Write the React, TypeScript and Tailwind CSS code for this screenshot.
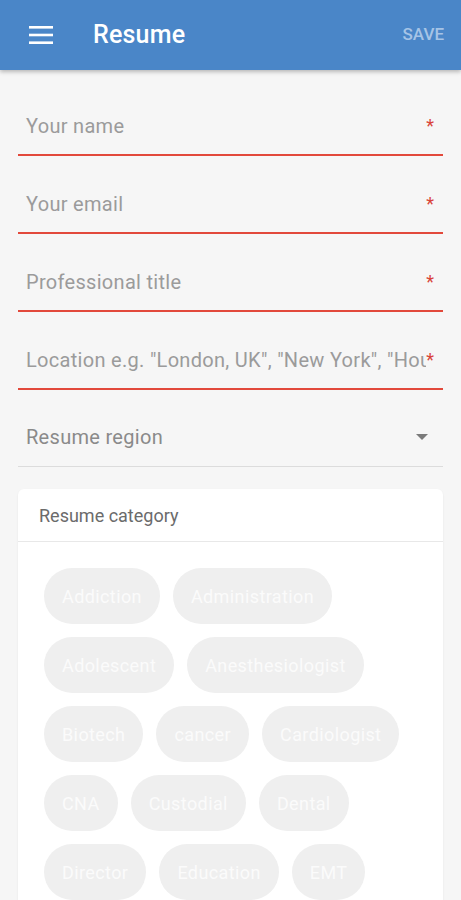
import React from 'react'

const fields = [
    'Your name',
    'Your email',
    'Professional title',
    'Location e.g. "London, UK", "New York", "Houston, TX"',
]

const categories = [
    'Addiction',
    'Administration',
    'Adolescent',
    'Anesthesiologist',
    'Biotech',
    'cancer',
    'Cardiologist',
    'CNA',
    'Custodial',
    'Dental',
    'Director',
    'Education',
    'EMT',
    'Engineering',
    'Finance',
]

const MenuIcon = () => (
    <svg width="24" height="24" viewBox="0 0 24 24" fill="white">
        <rect x="0" y="3" width="24" height="2.6" />
        <rect x="0" y="10.7" width="24" height="2.6" />
        <rect x="0" y="18.4" width="24" height="2.6" />
    </svg>
)

const RequiredField: React.FC<{ label: string }> = ({ label }) => (
    <div className="pt-[36px] pb-[16px] border-b-2 border-[#e2493b] flex items-center">
        <span className="flex-1 min-w-0 pl-[8px] text-[20px] leading-[24px] tracking-[0.3px] text-[#9b9b9b] whitespace-nowrap overflow-hidden">
            {label}
        </span>
        <span className="text-[#d9443a] text-[18px] leading-[24px] pr-[9px]">*</span>
    </div>
)

export default function App() {
    return (
        <div
            className="h-[900px] bg-[#f6f6f6] overflow-hidden"
            style={{ fontFamily: 'Roboto, "Noto Sans", sans-serif' }}
        >
            {/* App bar */}
            <div className="h-[70px] bg-[#4a86c8] flex items-center shadow-[0_2px_4px_rgba(0,0,0,0.25)] relative z-10">
                <div className="pl-[29px] pr-[40px] flex items-center">
                    <MenuIcon />
                </div>
                <h1 className="flex-1 text-white text-[25px] font-medium tracking-[0.2px]">
                    Resume
                </h1>
                <button className="pr-[17px] text-[#a6c4e6] text-[17px] font-medium">
                    SAVE
                </button>
            </div>

            <div className="px-[18px] pt-[8px]">
                {fields.map((f) => (
                    <RequiredField key={f} label={f} />
                ))}

                {/* Region select */}
                <div className="pt-[35px] pb-[17px] border-b border-[#dcdcdc] flex items-center">
                    <span className="flex-1 pl-[8px] text-[20px] leading-[24px] tracking-[0.3px] text-[#8a8a8a]">
                        Resume region
                    </span>
                    <svg width="12" height="6" viewBox="0 0 12 6" className="mr-[15px]">
                        <path d="M0 0 L12 0 L6 6 Z" fill="#7a7a7a" />
                    </svg>
                </div>

                {/* Category card */}
                <div className="mt-[22px] bg-white rounded-[6px] shadow-[0_1px_2px_rgba(0,0,0,0.08)]">
                    <div className="h-[53px] flex items-center pl-[21px] border-b border-[#e8e8e8] text-[18px] text-[#6b6b6b]">
                        Resume category
                    </div>
                    <div className="px-[26px] pt-[26px] pb-[20px] flex flex-wrap gap-[13px]">
                        {categories.map((c) => (
                            <span
                                key={c}
                                className="h-[56px] px-[18px] rounded-full bg-[#efefef] text-[#fbfbfb] text-[18px] tracking-[0.4px] flex items-center"
                            >
                                {c}
                            </span>
                        ))}
                    </div>
                </div>
            </div>
        </div>
    )
}
